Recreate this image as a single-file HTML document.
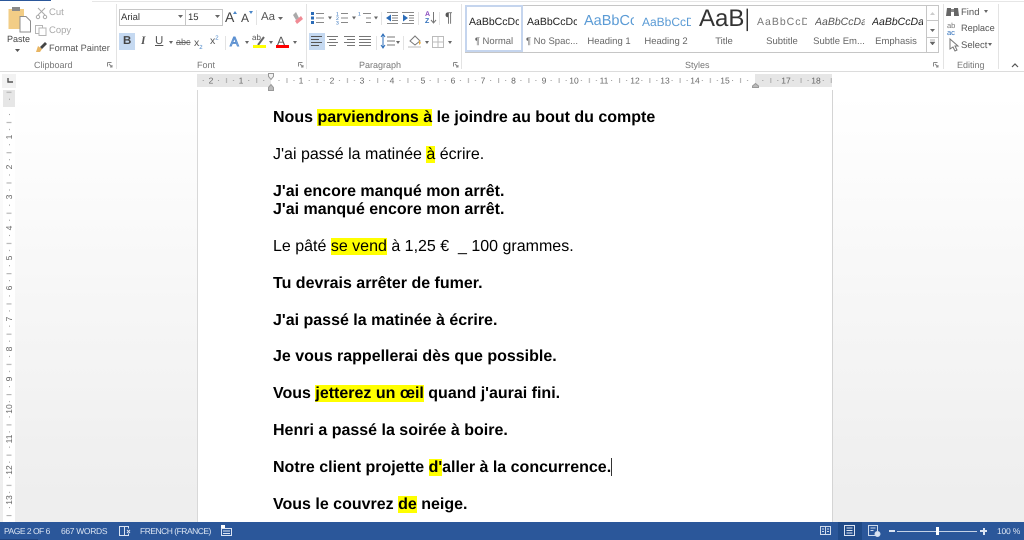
<!DOCTYPE html>
<html lang="fr"><head><meta charset="utf-8"><title>Word</title>
<style>
html,body{margin:0;padding:0;width:1024px;height:540px;overflow:hidden;background:#fff}
body{position:relative;font-family:"Liberation Sans",sans-serif;text-rendering:geometricPrecision}
#w{position:absolute;left:0;top:0;width:1024px;height:540px;overflow:hidden;filter:blur(.3px)}
.a{position:absolute;white-space:nowrap}
.gl{font-size:9px;color:#777;top:60px}
.sep{position:absolute;width:1px;background:#e3e3e3}
.st{font-size:9.5px;color:#666;top:36px;width:56px;text-align:center}
.l{position:absolute;left:273px;font-size:16px;line-height:18px;color:#000;white-space:pre;height:18px}
.b{font-weight:bold}
mark{background:#ff0;color:#000}
.sb{position:absolute;top:526px;font-size:8.5px;color:#dbe4f2;white-space:nowrap}
svg{position:absolute;overflow:visible}
</style></head><body><div id="w">
<!-- background -->
<div class="a" style="left:0;top:72px;width:1024px;height:450px;background:linear-gradient(#fff,#fff 5%,#eeeeee 95%)"></div>
<div class="a" style="left:197px;top:90px;width:634px;height:432px;background:#fff;border-left:1px solid #d8d8d8;border-right:1px solid #d4d4d4"></div>
<!-- ribbon -->
<div class="a" style="left:0;top:0;width:1024px;height:71px;background:#fff;border-bottom:1px solid #dcdcdc"></div>
<div class="a" style="left:0;top:0;width:51px;height:1px;background:#2b579a"></div>
<div class="a" style="left:92px;top:1px;width:932px;height:1px;background:#e6e6e6"></div>
<div class="sep" style="left:116px;top:4px;height:65px"></div>
<div class="sep" style="left:306px;top:4px;height:65px"></div>
<div class="sep" style="left:461px;top:4px;height:65px"></div>
<div class="sep" style="left:943px;top:4px;height:65px"></div>
<div class="sep" style="left:998px;top:4px;height:65px"></div>
<!-- clipboard -->
<svg style="left:8px;top:7px" width="24" height="26"><rect x="0.5" y="2" width="15.5" height="20" fill="#f2cd86"/><rect x="4" y="0" width="8" height="4" fill="#8a8a8a"/><path d="M12 9.5h6l4.500 4.500v11H12z" fill="#fff" stroke="#8e8e8e"/></svg>
<div class="a" style="left:7px;top:33.500px;font-size:9px;color:#444">Paste</div>
<svg style="left:15px;top:49px" width="5" height="3"><path d="M0 0h5L2.500 3z" fill="#555"/></svg>
<svg style="left:36px;top:7px" width="11" height="12" fill="none" stroke="#aaa"><path d="M2 1l7 7M9 1L2 8"/><circle cx="2" cy="10" r="1.700"/><circle cx="9" cy="10" r="1.700"/></svg>
<div class="a" style="left:49px;top:7px;font-size:9.500px;color:#aaa">Cut</div>
<svg style="left:35px;top:25px" width="12" height="11" fill="#fff" stroke="#b5b5b5"><rect x="0.500" y="0.500" width="7" height="8"/><rect x="4" y="3" width="7" height="7.500"/></svg>
<div class="a" style="left:49px;top:25px;font-size:9.500px;color:#aaa">Copy</div>
<svg style="left:35px;top:41px" width="13" height="12"><path d="M1 11l2-6 4 3-2 3z" fill="#e8b562"/><path d="M5 6l5-5 2 2-5 5z" fill="#444"/></svg>
<div class="a" style="left:49px;top:42.500px;font-size:9.200px;color:#555">Format Painter</div>
<div class="a gl" style="left:34px">Clipboard</div>
<svg style="left:107px;top:62px" width="6" height="6" fill="none" stroke="#888"><path d="M0.500 0.500h4M0.500 0.500v4M2 2l3 3M5 3v2H3"/></svg>
<!-- font -->
<div class="a" style="left:119px;top:9px;width:65px;height:15px;border:1px solid #c6c6c6;font-size:9.500px;line-height:15px;color:#333;text-indent:1px">Arial</div>
<div class="a" style="left:185px;top:9px;width:36px;height:15px;border:1px solid #c6c6c6;border-left:1px solid #c6c6c6;font-size:9.500px;line-height:15px;color:#333;text-indent:2px">15</div>
<svg style="left:178px;top:15px" width="5" height="3"><path d="M0 0h5L2.500 3z" fill="#666"/></svg>
<svg style="left:215px;top:15px" width="5" height="3"><path d="M0 0h5L2.500 3z" fill="#666"/></svg>
<div class="a" style="left:225px;top:9px;font-size:14px;color:#444">A</div>
<div class="a" style="left:241px;top:11px;font-size:12px;color:#444">A</div>
<svg style="left:233px;top:11px" width="20" height="3"><path d="M0 3l2-3 2 3zM16 0h4l-2 3z" fill="#4a86c8"/></svg>
<div class="a" style="left:261px;top:11px;font-size:11.500px;color:#555">Aa</div>
<svg style="left:278px;top:17px" width="5" height="3"><path d="M0 0h5L2.500 3z" fill="#666"/></svg>
<div class="sep" style="left:256px;top:10px;height:15px"></div>
<svg style="left:292px;top:12px" width="10" height="13"><path d="M1 3l3-3 3 6-3 2z" fill="#aaa"/><path d="M3 9l6-5 2 3-6 5z" fill="#f08a94"/></svg>
<div class="a" style="left:119px;top:33px;width:16px;height:17px;background:#c5d9f1"></div>
<div class="a" style="left:123px;top:35px;font-size:11.500px;font-weight:bold;color:#444">B</div>
<div class="a" style="left:141px;top:35px;font-size:11.500px;font-style:italic;font-family:'Liberation Serif',serif;font-weight:bold;color:#555">I</div>
<div class="a" style="left:155px;top:35px;font-size:11.500px;text-decoration:underline;color:#555">U</div>
<svg style="left:169px;top:41px" width="4" height="3"><path d="M0 0h4L2 3z" fill="#666"/></svg>
<div class="a" style="left:176px;top:37px;font-size:9px;color:#666;text-decoration:line-through">abc</div>
<div class="a" style="left:194px;top:37px;font-size:10.500px;color:#555">x<sub style="font-size:6px;color:#4a86c8">2</sub></div>
<div class="a" style="left:210px;top:35px;font-size:10.500px;color:#555">x<sup style="font-size:6px;color:#4a86c8">2</sup></div>
<div class="sep" style="left:225px;top:36px;height:14px"></div>
<div class="a" style="left:230px;top:34px;font-size:13px;color:#fff;-webkit-text-stroke:1px #5a8fd0">A</div>
<svg style="left:245px;top:41px" width="4" height="3"><path d="M0 0h4L2 3z" fill="#666"/></svg>
<div class="a" style="left:252px;top:33px;font-size:8px;color:#555">ab</div>
<svg style="left:253px;top:36px" width="13" height="12"><path d="M5 9l6-8" stroke="#666" stroke-width="2"/><rect x="0" y="9" width="13" height="3" fill="#ff0"/></svg>
<svg style="left:269px;top:41px" width="4" height="3"><path d="M0 0h4L2 3z" fill="#666"/></svg>
<div class="a" style="left:277px;top:34px;font-size:12px;color:#555">A</div>
<div class="a" style="left:276px;top:45px;width:13px;height:3px;background:#f00"></div>
<svg style="left:293px;top:41px" width="4" height="3"><path d="M0 0h4L2 3z" fill="#666"/></svg>
<div class="a gl" style="left:197px">Font</div>
<svg style="left:298px;top:62px" width="6" height="6" fill="none" stroke="#888"><path d="M0.500 0.500h4M0.500 0.500v4M2 2l3 3M5 3v2H3"/></svg>
<!-- paragraph -->
<svg style="left:311px;top:11px" width="140" height="15">
<g fill="#2b6cb8"><rect x="0" y="1" width="3" height="3"/><rect x="0" y="5.500" width="3" height="3"/><rect x="0" y="10" width="3" height="3"/></g>
<g stroke="#888"><path d="M5 2.500h8M5 7h8M5 11.500h8M30 2.500h7M30 7h7M30 11.500h7M52 2.500h8M55 7h5M55 11.500h5"/></g>
<g fill="#2b6cb8" font-size="5" font-family="Liberation Sans"><text x="25" y="4.500">1</text><text x="25" y="9">2</text><text x="25" y="13.500">3</text><text x="47" y="4.500">1</text></g>
<path d="M17 5.500h4l-2 3zM41 5.500h4l-2 3zM63 5.500h4l-2 3z" fill="#666"/>
<g stroke="#888"><path d="M76 1.500h11M81 4.500h6M81 7h6M81 9.500h6M76 12.500h11M91 1.500h12M98 4.500h5M98 7h5M98 9.500h5M91 12.500h12"/></g>
<path d="M75 7l5-3.500v7zM97 7l-5-3.500v7z" fill="#2b6cb8"/></svg>
<div class="sep" style="left:381px;top:12px;height:13px"></div>
<div class="a" style="left:425px;top:11px;font-size:7px;line-height:7px;color:#8a4ec0;font-weight:bold">A<br><span style="color:#2b6cb8">Z</span></div>
<svg style="left:431px;top:12px" width="5" height="12"><path d="M2.500 0v11M0 8l2.500 3L5 8" stroke="#777" fill="none"/></svg>
<div class="sep" style="left:418px;top:12px;height:13px"></div><div class="sep" style="left:439px;top:12px;height:13px"></div>
<div class="a" style="left:445px;top:9px;font-size:14px;color:#555">¶</div>
<div class="a" style="left:309px;top:33px;width:16px;height:17px;background:#c5d9f1"></div>
<svg style="left:311px;top:35px" width="65" height="13" stroke="#777"><path d="M0 1.500h11M0 4.500h8M0 7.500h11M0 10.500h8" stroke="#555"/><path d="M16 1.500h11M18 4.500h7M16 7.500h11M18 10.500h7M33 1.500h11M36 4.500h8M33 7.500h11M36 10.500h8M48 1.500h12M48 4.500h12M48 7.500h12M48 10.500h12"/></svg>
<div class="sep" style="left:376px;top:36px;height:14px"></div>
<svg style="left:380px;top:34px" width="20" height="15"><path d="M3 1v12M1 3l2-3 2 3M1 11l2 3 2-3" stroke="#2b6cb8" fill="none"/><path d="M7 3h8M7 7h8M7 11h8" stroke="#777"/></svg>
<svg style="left:396px;top:41px" width="4" height="3"><path d="M0 0h4L2 3z" fill="#666"/></svg>
<div class="sep" style="left:403px;top:36px;height:14px"></div>
<svg style="left:408px;top:35px" width="14" height="14"><path d="M2 6l5-5 5 5-5 4z" fill="#fff" stroke="#777"/><path d="M11 5l2 3-2 2z" fill="#f0b040"/><rect x="0" y="11" width="13" height="2" fill="#ddd"/></svg>
<svg style="left:425px;top:41px" width="4" height="3"><path d="M0 0h4L2 3z" fill="#666"/></svg>
<svg style="left:432px;top:36px" width="12" height="12" fill="none" stroke="#bbb"><rect x="0.500" y="0.500" width="11" height="11"/><path d="M6 0v12M0 6h12"/></svg>
<svg style="left:448px;top:41px" width="4" height="3"><path d="M0 0h4L2 3z" fill="#666"/></svg>
<div class="a gl" style="left:359px">Paragraph</div>
<svg style="left:453px;top:62px" width="6" height="6" fill="none" stroke="#888"><path d="M0.500 0.500h4M0.500 0.500v4M2 2l3 3M5 3v2H3"/></svg>
<!-- styles -->
<div class="a" style="left:465px;top:5px;width:472px;height:46px;border:1px solid #c6c6c6;background:#fff"></div>
<div class="a" style="left:465px;top:5px;width:54px;height:43px;border:2px solid #c5d5ee"></div>
<div class="a" style="left:926px;top:5px;width:1px;height:47px;background:#c6c6c6"></div>
<div class="a" style="left:927px;top:20px;width:11px;height:1px;background:#c6c6c6"></div>
<div class="a" style="left:927px;top:37px;width:11px;height:1px;background:#c6c6c6"></div>
<svg style="left:930px;top:12px" width="5" height="34"><path d="M0 3l2.500-3L5 3z" fill="#ccc"/><path d="M0 17h5l-2.500 3z" fill="#666"/><path d="M0 30h5l-2.500 3zM0 28h5" fill="#666" stroke="#666" stroke-width=".5"/></svg>
<div class="a" style="left:469px;top:16px;font-size:10.500px;color:#222;width:50px;overflow:hidden">AaBbCcDc</div>
<div class="a st" style="left:466px">¶ Normal</div>
<div class="a" style="left:527px;top:16px;font-size:10.500px;color:#222;width:50px;overflow:hidden">AaBbCcDc</div>
<div class="a st" style="left:524px">¶ No Spac...</div>
<div class="a" style="left:584px;top:13px;font-size:14.500px;color:#5b9bd5;width:50px;overflow:hidden">AaBbCc</div>
<div class="a st" style="left:581px">Heading 1</div>
<div class="a" style="left:642px;top:15px;font-size:12px;color:#5b9bd5;width:49px;overflow:hidden">AaBbCcD</div>
<div class="a st" style="left:638px">Heading 2</div>
<div class="a" style="left:699px;top:5px;font-size:24px;color:#333;width:49px;overflow:hidden">AaB|</div>
<div class="a st" style="left:696px">Title</div>
<div class="a" style="left:757px;top:16px;font-size:10.500px;letter-spacing:1px;color:#777;width:50px;overflow:hidden">AaBbCcD</div>
<div class="a st" style="left:754px">Subtitle</div>
<div class="a" style="left:815px;top:16px;font-size:10.500px;font-style:italic;color:#555;width:50px;overflow:hidden">AaBbCcDa</div>
<div class="a st" style="left:811px">Subtle Em...</div>
<div class="a" style="left:872px;top:16px;font-size:10.500px;font-style:italic;color:#222;width:51px;overflow:hidden">AaBbCcDa</div>
<div class="a st" style="left:868px">Emphasis</div>
<div class="a gl" style="left:685px">Styles</div>
<svg style="left:933px;top:62px" width="6" height="6" fill="none" stroke="#888"><path d="M0.500 0.500h4M0.500 0.500v4M2 2l3 3M5 3v2H3"/></svg>
<!-- editing -->
<svg style="left:946px;top:6px" width="13" height="11"><path d="M1 2h4v8H0zM8 2h4l1 8H8z" fill="#666"/><rect x="5" y="3" width="3" height="3" fill="#888"/></svg>
<div class="a" style="left:961px;top:6.500px;font-size:9.500px;color:#555">Find</div>
<svg style="left:984px;top:10px" width="4" height="3"><path d="M0 0h4L2 3z" fill="#666"/></svg>
<div class="a" style="left:947px;top:22px;font-size:7.500px;line-height:7px;color:#777">ab<br><span style="color:#2b6cb8">ac</span></div>
<div class="a" style="left:961px;top:23px;font-size:9.200px;color:#555">Replace</div>
<svg style="left:949px;top:38px" width="10" height="13"><path d="M1 1v10l3-2 2 4 2-1-2-4h3z" fill="#fff" stroke="#777"/></svg>
<div class="a" style="left:961px;top:39.500px;font-size:9.500px;color:#555">Select</div>
<svg style="left:988px;top:43px" width="4" height="3"><path d="M0 0h4L2 3z" fill="#666"/></svg>
<div class="a gl" style="left:957px">Editing</div>
<svg style="left:1011px;top:63px" width="8" height="5" fill="none" stroke="#555" stroke-width="1.200"><path d="M1 4l3-3 3 3"/></svg>
<!-- corner -->
<div class="a" style="left:2px;top:74px;width:14px;height:14px;background:#f2f2f2"></div>
<svg style="left:7px;top:78px" width="6" height="5" fill="none" stroke="#555" stroke-width="1.400"><path d="M1 0v4h5"/></svg>
<!-- h ruler -->
<svg style="left:197px;top:74px" width="635" height="13" font-family="Liberation Sans" font-size="8.500" fill="#666" text-anchor="middle">
<defs><pattern id="p" x="14" width="30.240" height="13" patternUnits="userSpaceOnUse"><rect x="7" y="6" width="1" height="1" fill="#999"/><rect x="15" y="4" width="1" height="5" fill="#aaa"/><rect x="22" y="6" width="1" height="1" fill="#999"/></pattern></defs>
<rect x="0" y="0" width="635" height="13" fill="#fff"/>
<rect x="0" y="0" width="74" height="13" fill="#e6e6e6"/><rect x="558" y="0" width="77" height="13" fill="#e6e6e6"/>
<rect x="0" y="0" width="635" height="13" fill="url(#p)"/>
<g><text x="14" y="9.500">2</text><text x="44" y="9.500">1</text><text x="104" y="9.500">1</text><text x="135" y="9.500">2</text><text x="165" y="9.500">3</text><text x="195" y="9.500">4</text><text x="226" y="9.500">5</text><text x="256" y="9.500">6</text><text x="286" y="9.500">7</text><text x="316.500" y="9.500">8</text><text x="347" y="9.500">9</text><text x="377" y="9.500">10</text><text x="407" y="9.500">11</text><text x="438" y="9.500">12</text><text x="468" y="9.500">13</text><text x="498" y="9.500">14</text><text x="528" y="9.500">15</text><text x="589" y="9.500">17</text><text x="619" y="9.500">18</text></g></svg>
<svg style="left:268px;top:73px" width="7" height="18"><path d="M0.500 0.500h5v3l-2.500 3-2.500-3z" fill="#f2f2f2" stroke="#999"/><path d="M0.500 14.500l2.500-3 2.500 3v3h-5z" fill="#bbb" stroke="#999"/></svg>
<svg style="left:752px;top:83px" width="7" height="5"><path d="M0.500 4.500v-1.500l3-2.500 3 2.500v1.500z" fill="#bbb" stroke="#999"/></svg>
<!-- v ruler -->
<svg style="left:3px;top:90px" width="12" height="432" font-family="Liberation Sans" font-size="8.500" fill="#666" text-anchor="middle">
<defs><pattern id="q" y="17" width="12" height="30.240" patternUnits="userSpaceOnUse"><rect x="6" y="7" width="1" height="1" fill="#999"/><rect x="3.500" y="15" width="5" height="1" fill="#aaa"/><rect x="6" y="22" width="1" height="1" fill="#999"/></pattern></defs>
<rect width="12" height="432" fill="#fff"/><rect width="12" height="17" y="0" fill="#e6e6e6"/><rect width="12" height="432" fill="url(#q)"/>
<text transform="translate(9,47) rotate(-90)">1</text><text transform="translate(9,77) rotate(-90)">2</text><text transform="translate(9,107) rotate(-90)">3</text><text transform="translate(9,138) rotate(-90)">4</text><text transform="translate(9,168) rotate(-90)">5</text><text transform="translate(9,198) rotate(-90)">6</text><text transform="translate(9,229) rotate(-90)">7</text><text transform="translate(9,259) rotate(-90)">8</text><text transform="translate(9,289) rotate(-90)">9</text><text transform="translate(9,319) rotate(-90)">10</text><text transform="translate(9,349) rotate(-90)">11</text><text transform="translate(9,380) rotate(-90)">12</text><text transform="translate(9,410) rotate(-90)">13</text></svg>
<!-- document -->
<div class="l b" style="top:109px">Nous <mark>parviendrons à</mark> le joindre au bout du compte</div>
<div class="l" style="top:146px">J'ai passé la matinée <mark>à</mark> écrire.</div>
<div class="l b" style="top:183px">J'ai encore manqué mon arrêt.</div>
<div class="l b" style="top:201px">J'ai manqué encore mon arrêt.</div>
<div class="l" style="top:238px">Le pâté <mark>se vend</mark> à 1,25 €  _ 100 grammes.</div>
<div class="l b" style="top:275px">Tu devrais arrêter de fumer.</div>
<div class="l b" style="top:312px">J'ai passé la matinée à écrire.</div>
<div class="l b" style="top:348px">Je vous rappellerai dès que possible.</div>
<div class="l b" style="top:385px">Vous <mark>jetterez un œil</mark> quand j'aurai fini.</div>
<div class="l b" style="top:422px">Henri a passé la soirée à boire.</div>
<div class="l b" style="top:459px">Notre client projette <mark>d'</mark>aller à la concurrence.</div>
<div class="a" style="left:611px;top:458px;width:1px;height:18px;background:#333"></div>
<div class="l b" style="top:496px">Vous le couvrez <mark>de</mark> neige.</div>
<!-- status -->
<div class="a" style="left:0;top:522px;width:1024px;height:18px;background:#2b579a"></div>
<div class="a" style="left:0;top:539px;width:38px;height:1px;background:#1f4480"></div>
<div class="sb" style="left:4px;letter-spacing:-.5px">PAGE 2 OF 6</div>
<div class="sb" style="left:61px;letter-spacing:-.33px">667 WORDS</div>
<svg style="left:119px;top:526px" width="12" height="10" fill="none" stroke="#dbe4f2"><path d="M0.500 0.500h5v9h-5zM5.500 0.500h4v2M5.500 9.500h4v-2"/><path d="M8 4l3 3M11 4l-3 3"/></svg>
<div class="sb" style="left:140px;letter-spacing:-.5px">FRENCH (FRANCE)</div>
<svg style="left:221px;top:525px" width="11" height="11" fill="none" stroke="#dbe4f2"><path d="M0.500 3.500h10v7h-10zM2 6h7M2 8.500h7"/><rect x="0" y="0" width="4" height="3" fill="#fff" stroke="none"/></svg>
<svg style="left:820px;top:525px" width="14" height="11" fill="none" stroke="#cfdbec"><path d="M0.500 1.500h5v8h-5zM5.500 1.500h5v8h-5zM2 4h2M2 6.500h2M7 4h2M7 6.500h2"/></svg>
<div class="a" style="left:838px;top:522px;width:24px;height:18px;background:#1f4a88"></div>
<svg style="left:844px;top:525px" width="12" height="12" fill="none" stroke="#dbe4f2"><path d="M0.500 0.500h10v10h-10zM2.500 3h6M2.500 5.500h6M2.500 8h6"/></svg>
<svg style="left:868px;top:525px" width="13" height="12" fill="none" stroke="#cfdbec"><path d="M0.500 0.500h9v10h-9zM2.500 3h5M2.500 5.500h3"/><circle cx="9.500" cy="9" r="2.500" fill="#dbe4f2"/></svg>
<div class="a" style="left:889px;top:530px;width:6px;height:2px;background:#dbe4f2"></div>
<div class="a" style="left:897px;top:531px;width:80px;height:1px;background:#c4d2e6"></div>
<div class="a" style="left:936px;top:527px;width:3px;height:8px;background:#fff"></div>
<div class="a" style="left:980px;top:530px;width:7px;height:2px;background:#dbe4f2"></div>
<div class="a" style="left:982.500px;top:527.500px;width:2px;height:7px;background:#dbe4f2"></div>
<div class="sb" style="left:997px;letter-spacing:-.2px">100 %</div>
</div></body></html>
